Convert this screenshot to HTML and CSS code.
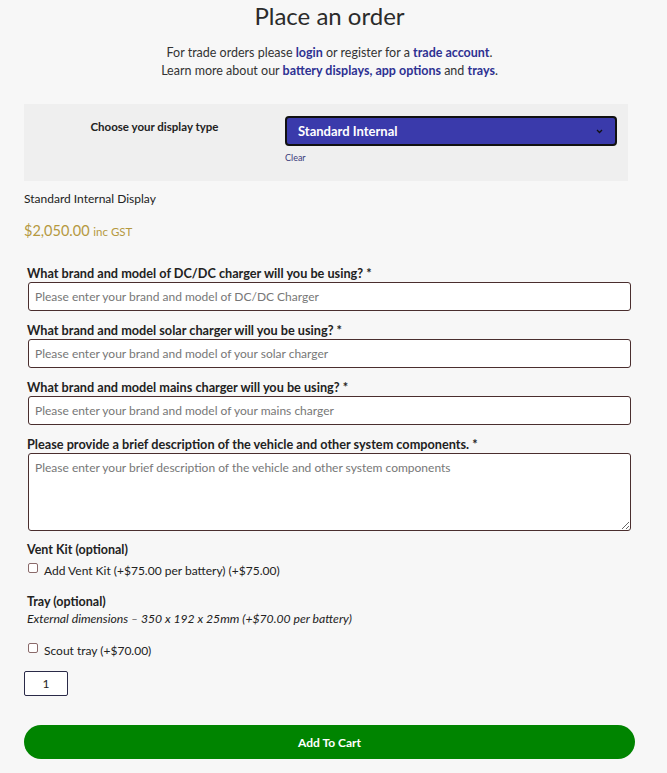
FILE: index.html
```html
<!DOCTYPE html>
<html lang="en">
<head>
<meta charset="utf-8">
<title>Place an order</title>
<link rel="stylesheet" href="styles.css">
</head>
<body>
<main class="page">
  <h1 class="title">Place an order</h1>
  <p class="intro">For trade orders please <a href="#">login</a> or register for a <a href="#">trade account</a>.<br>Learn more about our <a href="#">battery displays, app options</a> and <a href="#">trays</a>.</p>

  <div class="variations">
    <div class="var-label">Choose your display type</div>
    <div class="var-value">
      <div class="select">
        <span>Standard Internal</span>
        <svg class="chev" width="7" height="5" viewBox="0 0 7 5"><path d="M1 1 L3.5 3.5 L6 1" fill="none" stroke="#111" stroke-width="1.3"/></svg>
      </div>
      <a href="#" class="clear">Clear</a>
    </div>
  </div>

  <p class="desc">Standard Internal Display</p>
  <p class="price">$2,050.00 <small>inc GST</small></p>

  <div class="field">
    <label class="flabel">What brand and model of DC/DC charger will you be using? *</label>
    <input class="text" type="text" placeholder="Please enter your brand and model of DC/DC Charger">
  </div>
  <div class="field">
    <label class="flabel">What brand and model solar charger will you be using? *</label>
    <input class="text" type="text" placeholder="Please enter your brand and model of your solar charger">
  </div>
  <div class="field">
    <label class="flabel">What brand and model mains charger will you be using? *</label>
    <input class="text" type="text" placeholder="Please enter your brand and model of your mains charger">
  </div>
  <div class="field">
    <label class="flabel">Please provide a brief description of the vehicle and other system components. *</label>
    <textarea class="area" placeholder="Please enter your brief description of the vehicle and other system components"></textarea>
  </div>

  <div class="addon">
    <div class="addon-title">Vent Kit (optional)</div>
    <label class="check"><span class="box"></span> Add Vent Kit (+$75.00 per battery) (+$75.00)</label>
  </div>

  <div class="addon tray">
    <div class="addon-title">Tray (optional)</div>
    <div class="addon-desc">External dimensions – 350 x 192 x 25mm (+$70.00 per battery)</div>
    <label class="check scout"><span class="box"></span> Scout tray (+$70.00)</label>
  </div>

  <div class="qty">1</div>

  <button class="cart">Add To Cart</button>
</main>
</body>
</html>
```

FILE: styles.css
```css
* { box-sizing: border-box; }
html, body { margin: 0; padding: 0; }
body {
  background: #f7f7f7;
  font-family: Lato, "Liberation Sans", sans-serif;
  color: #222;
}
.page {
  padding: 0 32px 0 24px;
  display: flex;
  flex-direction: column;
}
.title {
  margin: 1px 0 0;
  font-size: 24px;
  font-weight: 400;
  line-height: 30px;
  text-align: center;
  color: #2b2b2b;
}
.intro {
  margin: 13px 0 0;
  font-size: 12.5px;
  line-height: 18px;
  text-align: center;
  color: #333;
}
.intro a {
  color: #2e3192;
  font-weight: 700;
  text-decoration: none;
}
.variations {
  margin-top: 24px;
  width: 604px;
  background: #efefef;
  display: grid;
  grid-template-columns: 261px 1fr;
  padding: 12px 11px 17px 0;
}
.var-label {
  text-align: center;
  font-size: 11.5px;
  font-weight: 700;
  padding-top: 4px;
  color: #222;
}
.var-value {
  display: flex;
  flex-direction: column;
}
.select {
  height: 30px;
  background: #3a3aab;
  border: 2px solid #111;
  border-radius: 4px;
  color: #fff;
  font-weight: 700;
  font-size: 13px;
  display: flex;
  align-items: center;
  justify-content: space-between;
  padding: 0 12px 0 11px;
}
.clear {
  margin-top: 6px;
  font-size: 9px;
  color: #3a3a7a;
  text-decoration: none;
  line-height: 12px;
}
.desc {
  margin: 10px 0 0;
  font-size: 12px;
  line-height: 16px;
  color: #222;
}
.price {
  margin: 15px 0 0;
  font-size: 14.5px;
  line-height: 18px;
  color: #b5993f;
}
.price small {
  font-size: 11.5px;
}
.field {
  margin-top: 25px;
  padding-left: 3px;
  display: flex;
  flex-direction: column;
}
.field + .field { margin-top: 12px; }
.flabel {
  font-size: 12.7px;
  font-weight: 700;
  line-height: 15px;
  color: #222;
}
.text, .area {
  margin: 1px 0 0 1px;
  width: 603px;
  height: 29px;
  border: 1px solid #4a2e2e;
  border-radius: 3px;
  background: #fff;
  font-family: inherit;
  font-size: 12px;
  padding: 0 6px;
  color: #222;
}
.text::placeholder, .area::placeholder { color: #777; }
.area {
  height: 78px;
  padding: 6px 6px;
  resize: vertical;
}
.addon {
  margin-top: 10px;
  padding-left: 3px;
  display: flex;
  flex-direction: column;
}
.addon-title {
  font-size: 12.5px;
  font-weight: 700;
  line-height: 18px;
  color: #222;
}
.check {
  font-size: 12px;
  line-height: 18px;
  margin-top: 3px;
  display: flex;
  align-items: center;
  gap: 6px;
  color: #222;
}
.box {
  margin-left: 1px;
  width: 10px;
  height: 10px;
  border: 1px solid #8a6a6a;
  border-radius: 2px;
  background: #fff;
  position: relative;
  top: -3px;
}
.tray { margin-top: 13px; }
.addon-desc {
  font-size: 12.2px;
  font-style: italic;
  line-height: 16px;
  color: #222;
}
.scout { margin-top: 15px; }
.qty {
  margin-top: 11px;
  width: 44px;
  height: 25px;
  border: 1px solid #2a2a48;
  border-radius: 2px;
  background: #fff;
  font-size: 12px;
  display: flex;
  align-items: center;
  justify-content: center;
  color: #222;
}
.cart {
  margin-top: 29px;
  width: 611px;
  height: 34px;
  border: none;
  border-radius: 17px;
  background: #008400;
  color: #fff;
  font-family: inherit;
  font-size: 12px;
  font-weight: 700;
  cursor: pointer;
}
```
